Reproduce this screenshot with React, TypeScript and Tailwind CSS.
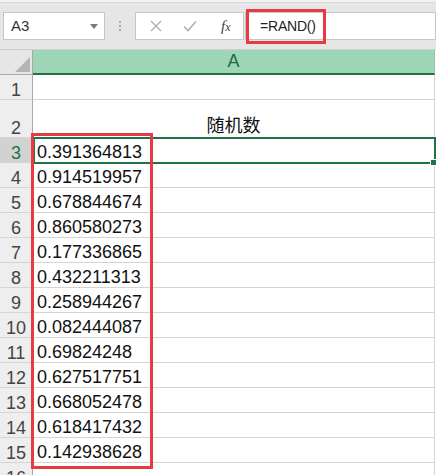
import React from "react"

const values = [
  "0.391364813",
  "0.914519957",
  "0.678844674",
  "0.860580273",
  "0.177336865",
  "0.432211313",
  "0.258944267",
  "0.082444087",
  "0.69824248",
  "0.627517751",
  "0.668052478",
  "0.618417432",
  "0.142938628",
]

const font = { fontFamily: '"Liberation Sans", Arial, sans-serif' }
const cjk = { fontFamily: '"Liberation Sans", "Noto Sans CJK SC", sans-serif' }

function RowHead({ n, active, h }: { n: number; active?: boolean; h: string }) {
  return (
    <div
      className={`${h} w-[33px] shrink-0 border-b border-r border-b-[#d5d5d5] border-r-[#a9a9a9] flex items-end justify-center text-[18px] leading-[18px] ${
        active ? "bg-[#d2d2d2] text-[#217346]" : "bg-[#eeeeee] text-[#444444]"
      }`}
    >
      {n}
    </div>
  )
}

function Row({ n, h, active, children, center }: { n: number; h: string; active?: boolean; children?: React.ReactNode; center?: boolean }) {
  return (
    <div className="flex">
      <RowHead n={n} h={h} active={active} />
      <div
        className={`${h} w-[402px] border-b border-r border-[#d4d4d4] bg-white flex items-end text-[18px] leading-[18px] text-[#111111] ${
          center ? "justify-center" : "pl-[4px]"
        }`}
      >
        {children}
      </div>
    </div>
  )
}

export default function App() {
  return (
    <div className="relative w-[436px] h-[475px] overflow-hidden bg-white" style={font}>
      {/* formula bar */}
      <div className="h-[50px] bg-[#e6e6e6] border-b border-[#cfcfcf] relative">
        <div className="h-[3px] bg-[#f2f2f2] border-b border-[#d8d8d8]" />
        <div className="flex items-center mt-[9px]">
          <div className="ml-[3px] w-[102px] h-[28px] bg-white border border-[#c6c6c6] flex items-center justify-between pl-[7px] pr-[6px]">
            <span className="text-[15px] text-[#333333]">A3</span>
            <svg width="8" height="5" viewBox="0 0 8 5">
              <path d="M0 0 L8 0 L4 5 Z" fill="#7a7a7a" />
            </svg>
          </div>
          <div className="w-[30px] flex flex-col items-center gap-[2px]">
            <span className="w-[2px] h-[2px] bg-[#ababab]" />
            <span className="w-[2px] h-[2px] bg-[#ababab]" />
            <span className="w-[2px] h-[2px] bg-[#ababab]" />
          </div>
          <div className="w-[109px] h-[28px] bg-white border border-[#c6c6c6] flex items-center">
            <svg width="12" height="12" viewBox="0 0 12 12" className="ml-[14px]">
              <path d="M1 1 L11 11 M11 1 L1 11" stroke="#b0b0b0" strokeWidth="1.4" />
            </svg>
            <svg width="14" height="12" viewBox="0 0 14 12" className="ml-[21px]">
              <path d="M1 6.5 L5 10.5 L13 1.5" stroke="#b0b0b0" strokeWidth="1.6" fill="none" />
            </svg>
            <span
              className="ml-[24px] text-[15px] italic text-[#444444]"
              style={{ fontFamily: '"Liberation Serif", "Times New Roman", serif' }}
            >
              f<span className="text-[12px]">x</span>
            </span>
          </div>
          <div className="ml-[1px] flex-1 h-[28px] bg-white border border-[#c6c6c6] flex items-center pl-[14px]">
            <span className="text-[14px] tracking-[-0.2px] text-[#222222]">=RAND()</span>
          </div>
        </div>
      </div>

      {/* column header */}
      <div className="flex h-[25px]">
        <div className="w-[33px] shrink-0 bg-[#e6e6e6] border-r border-[#a9a9a9] border-b border-b-[#a9a9a9] flex items-end justify-end pr-[2px] pb-[2px]">
          <svg width="15" height="15" viewBox="0 0 15 15">
            <path d="M15 0 L15 15 L0 15 Z" fill="#b5b5b5" />
          </svg>
        </div>
        <div className="w-[402px] bg-[#9fd5b7] border-b-2 border-[#217346] border-r border-r-[#9bbfa8] flex items-center justify-center text-[18px] text-[#1f6b41]">
          A
        </div>
      </div>

      <Row n={1} h="h-[25px]" />
      <Row n={2} h="h-[38px]" center>
        <span className="pb-[2px]" style={cjk}>随机数</span>
      </Row>
      {values.map((v, i) => (
        <Row key={v} n={i + 3} h="h-[25px]" active={i === 0}>
          <span className="pb-[1px]">{v}</span>
        </Row>
      ))}
      <Row n={16} h="h-[25px]" />

      {/* selected cell A3 */}
      <div className="absolute left-[33px] top-[137px] w-[403px] h-[27px] border-2 border-[#217346]" />
      <div className="absolute left-[430px] top-[159px] w-[7px] h-[7px] bg-[#217346] border border-white" />

      {/* red highlight boxes */}
      <div className="absolute left-[246px] top-[9px] w-[80px] h-[35px] border-[3px] border-[#e63b43]" />
      <div className="absolute left-[31px] top-[133px] w-[122px] h-[336px] border-[3px] border-[#e63b43]" />
    </div>
  )
}
